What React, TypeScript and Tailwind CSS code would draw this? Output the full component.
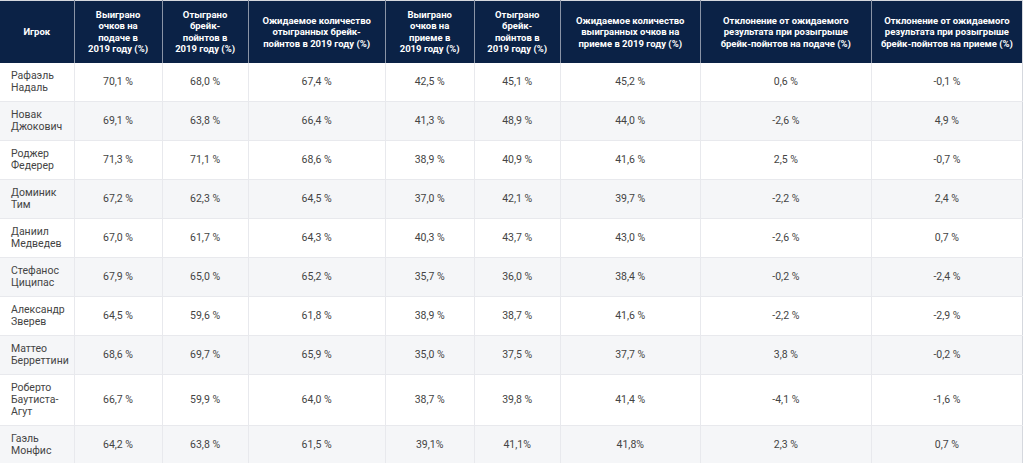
import React from "react";

const headers: string[][] = [
  ["Игрок"],
  ["Выиграно", "очков на", "подаче в", "2019 году (%)"],
  ["Отыграно", "брейк-", "пойнтов в", "2019 году (%)"],
  ["Ожидаемое количество", "отыгранных брейк-", "пойнтов в 2019 году (%)"],
  ["Выиграно", "очков на", "приеме в", "2019 году (%)"],
  ["Отыграно", "брейк-", "пойнтов в", "2019 году (%)"],
  ["Ожидаемое количество", "выигранных очков на", "приеме в 2019 году (%)"],
  ["Отклонение от ожидаемого", "результата при розыгрыше", "брейк-пойнтов на подаче (%)"],
  ["Отклонение от ожидаемого", "результата при розыгрыше", "брейк-пойнтов на приеме (%)"],
];

const widths = [74, 88, 86, 137, 89, 86, 140, 171, 151];

const rows: string[][] = [
  ["Рафаэль Надаль", "70,1 %", "68,0 %", "67,4 %", "42,5 %", "45,1 %", "45,2 %", "0,6 %", "-0,1 %"],
  ["Новак Джокович", "69,1 %", "63,8 %", "66,4 %", "41,3 %", "48,9 %", "44,0 %", "-2,6 %", "4,9 %"],
  ["Роджер Федерер", "71,3 %", "71,1 %", "68,6 %", "38,9 %", "40,9 %", "41,6 %", "2,5 %", "-0,7 %"],
  ["Доминик Тим", "67,2 %", "62,3 %", "64,5 %", "37,0 %", "42,1 %", "39,7 %", "-2,2 %", "2,4 %"],
  ["Даниил Медведев", "67,0 %", "61,7 %", "64,3 %", "40,3 %", "43,7 %", "43,0 %", "-2,6 %", "0,7 %"],
  ["Стефанос Циципас", "67,9 %", "65,0 %", "65,2 %", "35,7 %", "36,0 %", "38,4 %", "-0,2 %", "-2,4 %"],
  ["Александр Зверев", "64,5 %", "59,6 %", "61,8 %", "38,9 %", "38,7 %", "41,6 %", "-2,2 %", "-2,9 %"],
  ["Маттео Берреттини", "68,6 %", "69,7 %", "65,9 %", "35,0 %", "37,5 %", "37,7 %", "3,8 %", "-0,2 %"],
  ["Роберто Баутиста-Агут", "66,7 %", "59,9 %", "64,0 %", "38,7 %", "39,8 %", "41,4 %", "-4,1 %", "-1,6 %"],
  ["Гаэль Монфис", "64,2 %", "63,8 %", "61,5 %", "39,1%", "41,1%", "41,8%", "2,3 %", "0,7 %"],
];

export default function App() {
  return (
    <div className="w-[1024px] h-[463px] overflow-hidden bg-white" style={{ fontFamily: "Roboto, 'Noto Sans', sans-serif" }}>
      <table className="table-fixed border-collapse w-[1023px] border-t border-r border-[#d5d8de]">
        <colgroup>
          {widths.map((w, i) => (
            <col key={i} style={{ width: w }} />
          ))}
        </colgroup>
        <thead>
          <tr className="h-[62px] bg-[#0b2246]">
            {headers.map((h, i) => (
              <th
                key={i}
                className="px-[2px] text-center align-middle text-[9.5px] leading-[11.5px] font-bold text-white whitespace-nowrap border-l border-[#8a94a6] first:border-l-0"
              >
                {h.map((line, li) => (
                  <div key={li}>{line}</div>
                ))}
              </th>
            ))}
          </tr>
        </thead>
        <tbody>
          {rows.map((r, ri) => (
            <tr key={ri} className={ri % 2 === 0 ? "bg-white" : "bg-[#f5f6f8]"}>
              {r.map((c, ci) => (
                <td
                  key={ci}
                  className={
                    "py-[7px] text-[10.5px] leading-[12px] text-[#444444] border-b border-l border-[#e8e9ed] first:border-l-0 align-middle " +
                    (ci === 0 ? "pl-[11px] pr-[6px] text-left" : "px-[6px] text-center")
                  }
                >
                  {c}
                </td>
              ))}
            </tr>
          ))}
        </tbody>
      </table>
    </div>
  );
}
